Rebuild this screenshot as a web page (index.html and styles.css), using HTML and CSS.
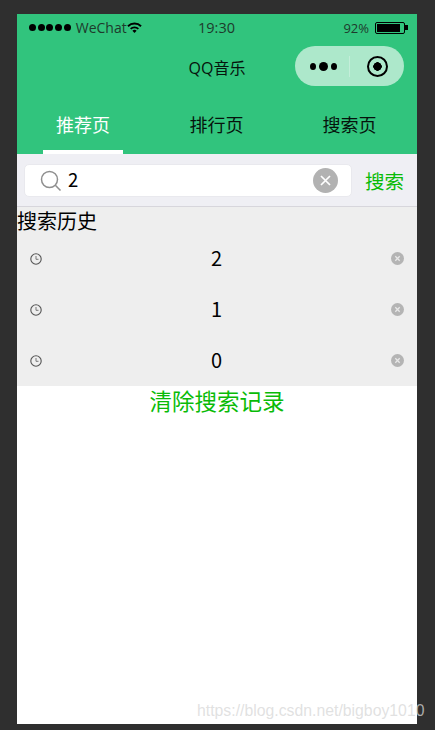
FILE: index.html
```html
<!DOCTYPE html>
<html lang="en">
    <head>
        <meta charset="UTF-8">
        <meta name="viewport" content="width=device-width, initial-scale=1.0">
        <title>QQ音乐</title>
        <link rel="stylesheet" href="styles.css">
    </head>
    <body>
        <div class="phone">
            <div class="status-bar">
                <div class="status-left">
                    <span class="dots"><i></i><i></i><i></i><i></i><i></i></span>
                    <span class="carrier">WeChat</span>
                    <svg class="wifi" width="15" height="11" viewBox="0 0 15 11">
                        <path d="M0.3 3.6A10.2 10.2 0 0 1 14.7 3.6L13.4 5A8.3 8.3 0 0 0 1.6 5Z"/>
                        <path d="M3 6.3A6.4 6.4 0 0 1 12 6.3L10.7 7.6A4.6 4.6 0 0 0 4.3 7.6Z"/>
                        <path d="M5.4 8.7A3 3 0 0 1 9.6 8.7L7.5 10.9Z"/>
                    </svg>
                </div>
                <span class="time">19:30</span>
                <div class="status-right">
                    <span class="percent">92%</span>
                    <span class="battery"><b></b></span>
                    <span class="battery-tip"></span>
                </div>
            </div>

            <div class="nav-bar">
                <span class="nav-title">QQ音乐</span>
                <div class="capsule">
                    <div class="capsule-dots"><i></i><i class="big"></i><i></i></div>
                    <div class="capsule-line"></div>
                    <div class="capsule-target"><b></b></div>
                </div>
            </div>

            <div class="tabs">
                <div class="tab active"><span>推荐页</span></div>
                <div class="tab"><span>排行页</span></div>
                <div class="tab"><span>搜索页</span></div>
            </div>

            <div class="search-bar">
                <div class="search-box">
                    <svg class="search-icon" width="22" height="22" viewBox="0 0 22 22">
                        <circle cx="9.5" cy="9.5" r="8" fill="none" stroke="#8f8f8f" stroke-width="1.5"/>
                        <path d="M15.3 15.3L20.5 20.5" stroke="#8f8f8f" stroke-width="1.6"/>
                    </svg>
                    <span class="search-value">2</span>
                    <svg class="clear-icon" width="25" height="25" viewBox="0 0 25 25">
                        <circle cx="12.5" cy="12.5" r="12.5" fill="#b2b2b2"/>
                        <path d="M8 8L17 17M17 8L8 17" stroke="#fff" stroke-width="1.7"/>
                    </svg>
                </div>
                <span class="search-btn">搜索</span>
            </div>

            <div class="history-title">搜索历史</div>

            <div class="history-list">
                <div class="history-row">
                    <svg class="clock" width="12" height="12" viewBox="0 0 12 12">
                        <circle cx="6" cy="6" r="5.2" fill="none" stroke="#555" stroke-width="1.1"/>
                        <path d="M6 3V6.3H8.5" fill="none" stroke="#777" stroke-width="1"/>
                    </svg>
                    <span class="history-text">2</span>
                    <svg class="remove" width="13" height="13" viewBox="0 0 13 13">
                        <circle cx="6.5" cy="6.5" r="6.5" fill="#b4b4b4"/>
                        <path d="M4.3 4.3L8.7 8.7M8.7 4.3L4.3 8.7" stroke="#e8e8e8" stroke-width="1.3"/>
                    </svg>
                </div>
                <div class="history-row">
                    <svg class="clock" width="12" height="12" viewBox="0 0 12 12">
                        <circle cx="6" cy="6" r="5.2" fill="none" stroke="#555" stroke-width="1.1"/>
                        <path d="M6 3V6.3H8.5" fill="none" stroke="#777" stroke-width="1"/>
                    </svg>
                    <span class="history-text">1</span>
                    <svg class="remove" width="13" height="13" viewBox="0 0 13 13">
                        <circle cx="6.5" cy="6.5" r="6.5" fill="#b4b4b4"/>
                        <path d="M4.3 4.3L8.7 8.7M8.7 4.3L4.3 8.7" stroke="#e8e8e8" stroke-width="1.3"/>
                    </svg>
                </div>
                <div class="history-row">
                    <svg class="clock" width="12" height="12" viewBox="0 0 12 12">
                        <circle cx="6" cy="6" r="5.2" fill="none" stroke="#555" stroke-width="1.1"/>
                        <path d="M6 3V6.3H8.5" fill="none" stroke="#777" stroke-width="1"/>
                    </svg>
                    <span class="history-text">0</span>
                    <svg class="remove" width="13" height="13" viewBox="0 0 13 13">
                        <circle cx="6.5" cy="6.5" r="6.5" fill="#b4b4b4"/>
                        <path d="M4.3 4.3L8.7 8.7M8.7 4.3L4.3 8.7" stroke="#e8e8e8" stroke-width="1.3"/>
                    </svg>
                </div>
            </div>

            <div class="clear-history">清除搜索记录</div>
        </div>

        <div class="watermark">https://blog.csdn.net/bigboy1010</div>
    </body>
</html>
```

FILE: styles.css
```css
* {
    box-sizing: border-box;
}

html, body {
    height: 100%;
}

body {
    margin: 0;
    padding: 14px 18px 6px 17px;
    background-color: #2f2f2f;
    font-family: "Noto Sans CJK SC", "Open Sans", sans-serif;
    overflow: hidden;
    position: relative;
}

.phone {
    width: 400px;
    height: 710px;
    background-color: #fff;
    display: flex;
    flex-direction: column;
}

.status-bar {
    height: 27px;
    padding: 0 9px 0 12px;
    background-color: #31c47d;
    display: flex;
    align-items: center;
    justify-content: space-between;
    position: relative;
    font-family: "Open Sans", sans-serif;
    color: #1e3a2c;
}

.status-left {
    display: flex;
    align-items: center;
}

.dots {
    display: flex;
    gap: 1.7px;
    margin-right: 5px;
}

.dots i {
    width: 7px;
    height: 7px;
    border-radius: 50%;
    background-color: #000;
}

.carrier {
    font-size: 14px;
}

.wifi {
    fill: #000;
}

.time {
    position: absolute;
    left: 181px;
    font-size: 14.5px;
}

.status-right {
    display: flex;
    align-items: center;
}

.percent {
    font-size: 13px;
    margin-right: 6px;
}

.battery {
    width: 30px;
    height: 12px;
    border: 1.5px solid #000;
    border-radius: 2px;
    padding: 1px;
    display: flex;
}

.battery b {
    width: 90%;
    background-color: #000;
}

.battery-tip {
    width: 3px;
    height: 5px;
    background-color: #000;
}

.nav-bar {
    height: 59px;
    background-color: #31c47d;
    position: relative;
    display: flex;
    align-items: center;
    justify-content: center;
}

.nav-title {
    font-size: 16px;
    color: #06130c;
    font-family: "Open Sans", "Noto Sans CJK SC", sans-serif;
    padding-bottom: 7px;
}

.capsule {
    position: absolute;
    right: 13px;
    top: 5px;
    width: 109px;
    height: 40px;
    border-radius: 20px;
    background-color: #ade8cb;
    display: flex;
    align-items: center;
}

.capsule-dots {
    width: 54px;
    padding-left: 2px;
    display: flex;
    align-items: center;
    justify-content: center;
    gap: 3px;
}

.capsule-dots i {
    width: 6px;
    height: 7px;
    border-radius: 50%;
    background-color: #000;
}

.capsule-dots i.big {
    width: 9px;
    height: 9px;
}

.capsule-line {
    width: 1px;
    height: 21px;
    background-color: #c4eeda;
}

.capsule-target {
    flex: 1;
    display: flex;
    align-items: center;
    justify-content: center;
}

.capsule-target b {
    width: 21px;
    height: 21px;
    border-radius: 50%;
    border: 2px solid #000;
    background: radial-gradient(circle, #000 0 4px, transparent 4.5px);
}

.tabs {
    height: 54px;
    background-color: #31c47d;
    display: flex;
    padding: 0 0 0 26px;
}

.tab {
    display: flex;
    justify-content: center;
    font-size: 18px;
    color: #06130c;
    padding-top: 11px;
}

.tab span {
    line-height: 26px;
}

.tab.active {
    width: 80px;
    margin-right: 27px;
    color: #fff;
    border-bottom: 4px solid #fff;
}

.tab + .tab {
    width: 133px;
}

.search-bar {
    height: 53px;
    background-color: #efeff4;
    border-bottom: 1px solid #d7d6dc;
    padding: 10px 13px 0 7px;
    display: flex;
    align-items: flex-start;
    justify-content: space-between;
}

.search-box {
    width: 328px;
    height: 33px;
    background-color: #fff;
    border: 1px solid #e9e9ee;
    border-radius: 5px;
    display: flex;
    align-items: center;
    padding: 0 13px 0 15px;
}

.search-icon {
    flex-shrink: 0;
}

.search-value {
    flex: 1;
    margin-left: 6px;
    padding-bottom: 4px;
    font-size: 18.5px;
    color: #000;
}

.clear-icon {
    flex-shrink: 0;
}

.search-btn {
    font-size: 19.5px;
    line-height: 33px;
    color: #09bb07;
}

.history-title {
    height: 26px;
    font-size: 20px;
    line-height: 27px;
    color: #000;
    background-color: #eee;
}

.history-list {
    background-color: #eee;
}

.history-row {
    height: 51px;
    padding: 0 13px;
    display: flex;
    align-items: center;
    justify-content: space-between;
}

.history-text {
    font-size: 20px;
    padding-bottom: 3px;
    color: #000;
}

.clear-history {
    text-align: center;
    font-size: 22.5px;
    line-height: 29px;
    color: #09bb07;
}

.watermark {
    position: absolute;
    left: 197px;
    top: 702px;
    font-family: "Liberation Sans", sans-serif;
    font-size: 15.8px;
    color: rgba(215, 215, 215, 0.75);
    white-space: nowrap;
}
```
